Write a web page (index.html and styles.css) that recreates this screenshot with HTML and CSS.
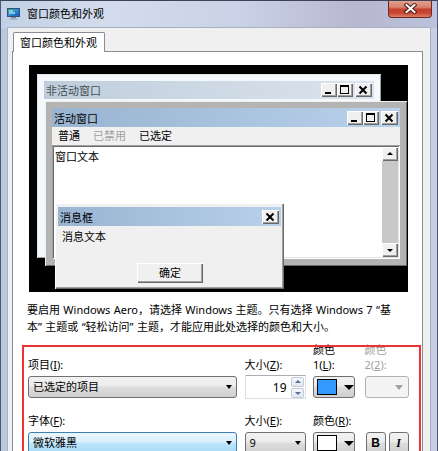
FILE: index.html
```html
<!DOCTYPE html>
<html lang="zh-CN">
<head>
    <meta charset="UTF-8">
    <meta name="viewport" content="width=device-width, initial-scale=1.0">
    <title>窗口颜色和外观</title>
    <link rel="stylesheet" href="styles.css">
</head>
<body>
    <div class="window">
        <div class="titlebar">
            <svg class="app-icon" width="13" height="12" viewBox="0 0 13 12">
                <defs>
                    <linearGradient id="scr" x1="0" y1="0" x2="1" y2="1">
                        <stop offset="0" stop-color="#36b25a"/>
                        <stop offset="0.5" stop-color="#2a8fd8"/>
                        <stop offset="1" stop-color="#1d4fa8"/>
                    </linearGradient>
                </defs>
                <rect x="0.5" y="0.5" width="12" height="8" fill="url(#scr)" stroke="#33507a"/>
                <path d="M2 3h4M2 5h6" stroke="#e6f3ff" stroke-width="1"/>
                <rect x="4" y="9" width="5" height="1.5" fill="#7d8796"/>
                <rect x="2.5" y="10.5" width="8" height="1.5" fill="#a9b2bf"/>
            </svg>
            <span class="title">窗口颜色和外观</span>
            <div class="close-btn">
                <svg width="13" height="11" viewBox="0 0 13 11">
                    <path d="M2.5 2l8 7M10.5 2l-8 7" stroke="#4a1c16" stroke-width="4" stroke-linecap="square"/>
                    <path d="M2.5 2l8 7M10.5 2l-8 7" stroke="#fff" stroke-width="2" stroke-linecap="square"/>
                </svg>
            </div>
        </div>

        <div class="client">
            <div class="tabs">
                <div class="tab">窗口颜色和外观</div>
            </div>

            <div class="page">
                <!-- preview of the current scheme -->
                <div class="preview">
                    <div class="pv-win pv-inactive">
                        <div class="pv-caption">
                            <span>非活动窗口</span>
                            <div class="caps">
                                <div class="cap"><svg width="16" height="14"><rect x="4" y="9" width="6" height="2"/></svg></div>
                                <div class="cap"><svg width="16" height="14"><path d="M3 2h9v9H3zM4 4v6h7V4z" fill-rule="evenodd"/></svg></div>
                                <div class="cap cap-close"><svg width="16" height="14"><path d="M4.5 3.5l7 7M11.5 3.5l-7 7" stroke="#000" stroke-width="2"/></svg></div>
                            </div>
                        </div>
                    </div>

                    <div class="pv-win pv-active">
                        <div class="pv-caption">
                            <span>活动窗口</span>
                            <div class="caps">
                                <div class="cap"><svg width="16" height="14"><rect x="4" y="9" width="6" height="2"/></svg></div>
                                <div class="cap"><svg width="16" height="14"><path d="M3 2h9v9H3zM4 4v6h7V4z" fill-rule="evenodd"/></svg></div>
                                <div class="cap cap-close"><svg width="16" height="14"><path d="M4.5 3.5l7 7M11.5 3.5l-7 7" stroke="#000" stroke-width="2"/></svg></div>
                            </div>
                        </div>
                        <div class="pv-menu">
                            <span>普通</span>
                            <span class="grayed">已禁用</span>
                            <span>已选定</span>
                        </div>
                        <div class="pv-text">
                            <div class="pv-body">窗口文本</div>
                            <div class="pv-scroll">
                                <div class="sb-btn sb-up"></div>
                                <div class="sb-btn sb-down"></div>
                            </div>
                        </div>
                    </div>

                    <div class="pv-win pv-msg">
                        <div class="pv-caption">
                            <span>消息框</span>
                            <div class="caps">
                                <div class="cap cap-close"><svg width="16" height="14"><path d="M4.5 3.5l7 7M11.5 3.5l-7 7" stroke="#000" stroke-width="2"/></svg></div>
                            </div>
                        </div>
                        <div class="pv-msgtext">消息文本</div>
                        <div class="pv-ok">确定</div>
                    </div>
                </div>

                <p class="note">
                    <span>要启用 Windows Aero，请选择 Windows 主题。只有选择 Windows 7 “基</span>
                    <span>本” 主题或 “轻松访问” 主题，才能应用此处选择的颜色和大小。</span>
                </p>

                <div class="settings">
                    <label class="lbl">项目(<u>I</u>):</label>
                    <label class="lbl">大小(<u>Z</u>):</label>
                    <label class="lbl">颜色<br>1(<u>L</u>):</label>
                    <label class="lbl grayed">颜色<br>2(<u>2</u>):</label>

                    <div class="combo">已选定的项目</div>
                    <div class="spin">
                        <span class="spin-val">19</span>
                        <div class="spin-btns">
                            <div class="spin-btn spin-up"></div>
                            <div class="spin-btn spin-down"></div>
                        </div>
                    </div>
                    <div class="color-btn"><span class="swatch swatch-blue"></span><span class="big-arrow"></span></div>
                    <div class="combo combo-off"></div>

                    <label class="lbl lbl-r2">字体(<u>F</u>):</label>
                    <label class="lbl lbl-r2">大小(<u>E</u>):</label>
                    <label class="lbl lbl-r2">颜色(<u>R</u>):</label>
                    <span class="lbl lbl-r2"></span>

                    <div class="combo combo-hot">微软雅黑</div>
                    <div class="combo">9</div>
                    <div class="color-btn"><span class="swatch"></span><span class="big-arrow"></span></div>
                    <div class="style-btns">
                        <div class="style-btn bold">B</div>
                        <div class="style-btn italic">I</div>
                    </div>
                </div>
            </div>
        </div>
    </div>
</body>
</html>
```

FILE: styles.css
```css
* {
    box-sizing: border-box;
}
body {
    margin: 0;
    width: 438px;
    height: 451px;
    overflow: hidden;
    font-family: "Noto Sans", "Noto Sans CJK SC", sans-serif;
    font-size: 11px;
    color: #000;
    background: #c5d2e5;
}
p {
    margin: 0;
}

/* outer frame */
.window {
    height: 451px;
    overflow: hidden;
    padding: 0 7px;
    border-top: 1px solid #3d4256;
    border-left: 1px solid #50567a;
    border-right: 1px solid #50567a;
    background: linear-gradient(to right, #b9c8dd 0%, #c9d5e8 30%, #cdd6e8 60%, #c1c4da 85%, #c7cfe3 100%);
}
.titlebar {
    display: flex;
    align-items: flex-start;
    height: 27px;
    margin: 0 -7px;
    padding-left: 6px;
    background: linear-gradient(to right, #c2d1e5 0%, #d3dcec 25%, #c9d2e6 55%, #b8b6d0 82%, #bcc3dc 100%);
}
.app-icon {
    margin-top: 7px;
}
.title {
    margin-left: 7px;
    margin-top: 5px;
    line-height: 16px;
    font-size: 11px;
    flex: 1;
}
.close-btn {
    width: 44px;
    height: 18px;
    margin-top: -1px;
    margin-right: 5px;
    display: flex;
    align-items: center;
    justify-content: center;
    border: 1px solid #6a2b22;
    border-top: none;
    border-radius: 0 0 4px 4px;
    background: linear-gradient(to bottom, #e4a595 0%, #d8826f 42%, #c5412b 55%, #c8462f 75%, #df7e67 100%);
}

.client {
    height: 423px;
    background: #f0f0f0;
    box-shadow: 0 0 0 1px #a6b1c4;
}

/* tab strip */
.tabs {
    height: 23px;
    padding: 4px 0 0 5px;
}
.tab {
    position: relative;
    z-index: 1;
    width: 92px;
    height: 20px;
    padding-left: 6px;
    line-height: 19px;
    background: #fff;
    border: 1px solid #898c95;
    border-bottom: none;
    border-radius: 2px 2px 0 0;
}
.page {
    height: 400px;
    overflow: hidden;
    margin: 0 7px 0 4px;
    padding-top: 13px;
    background: #fff;
    border: 1px solid #898c95;
    border-bottom: none;
}

/* scheme preview */
.preview {
    position: relative;
    width: 379px;
    height: 227px;
    margin-left: 16px;
    background: #000;
}
.pv-win {
    position: absolute;
}
.pv-inactive {
    left: 8px;
    top: 9px;
    width: 344px;
    height: 184px;
    padding: 7px;
    background: #f4f7fc;
    box-shadow: inset 1px 1px #e3e3e3, inset -1px -1px #a0a0a0;
}
.pv-active {
    left: 16px;
    top: 36px;
    width: 362px;
    height: 165px;
    padding: 7px 7px 6px;
    background: #b4b4b4;
    box-shadow: inset 1px 1px #f0f0f0, inset -1px -1px #696969;
}
.pv-msg {
    left: 26px;
    top: 138px;
    width: 229px;
    height: 86px;
    padding: 4px 3px 3px 3px;
    background: #f0f0f0;
    box-shadow: inset 1px 1px #fff, inset -1px -1px #696969, inset -2px -2px #a0a0a0;
}
.pv-caption {
    display: flex;
    align-items: center;
    justify-content: space-between;
    height: 19px;
    padding: 0 2px 0 2px;
    background: linear-gradient(to right, #99b4d1, #b9d1ea);
}
.pv-inactive .pv-caption {
    height: 18px;
    color: #434e54;
    background: linear-gradient(to right, #bfcddb, #dbe4ee);
}
.caps {
    display: flex;
}
.cap {
    width: 16px;
    height: 14px;
    background: #f0f0f0;
    box-shadow: inset 1px 1px #fff, inset -1px -1px #696969, inset -2px -2px #a0a0a0;
}
.cap svg {
    display: block;
}
.cap-close {
    margin-left: 2px;
    width: 17px;
}
.pv-menu {
    display: flex;
    height: 18px;
    line-height: 18px;
    padding-left: 6px;
    gap: 13px;
    background: #f0f0f0;
}
.grayed {
    color: #a0a0a0;
}
.pv-text {
    display: flex;
    height: 114px;
    background: #fff;
    box-shadow: inset 1px 1px #a0a0a0, inset -1px -1px #fff, inset 2px 2px #696969, inset -2px -2px #e3e3e3;
    padding: 2px;
}
.pv-body {
    flex: 1;
    padding: 2px 0 0 1px;
    line-height: 15px;
}
.pv-scroll {
    display: flex;
    flex-direction: column;
    justify-content: space-between;
    width: 16px;
    background: #c8c8c8;
}
.sb-btn {
    position: relative;
    height: 14px;
    background: #f0f0f0;
    box-shadow: inset 1px 1px #fff, inset -1px -1px #696969, inset -2px -2px #a0a0a0;
}
.sb-btn::after {
    content: "";
    position: absolute;
    left: 5px;
    border-left: 3px solid transparent;
    border-right: 3px solid transparent;
}
.sb-up::after {
    top: 5px;
    border-bottom: 3px solid #000;
}
.sb-down::after {
    top: 6px;
    border-top: 3px solid #000;
}
.pv-msgtext {
    margin: 3px 0 0 4px;
    line-height: 15px;
}
.pv-ok {
    width: 66px;
    height: 20px;
    margin: 19px 0 0 79px;
    line-height: 19px;
    text-align: center;
    background: #f0f0f0;
    box-shadow: inset 1px 1px #fff, inset -1px -1px #696969, inset -2px -2px #a0a0a0;
}

.note {
    margin: 9px 0 0 14px;
    line-height: 17px;
    white-space: nowrap;
    word-spacing: 0.5px;
}
.note span {
    display: block;
}

/* item / font settings */
.settings {
    position: relative;
    display: grid;
    grid-template-columns: 209px 61px 44px 44px;
    column-gap: 7.5px;
    width: 395px;
    margin: 7px 0 0 9px;
    padding-left: 6px;
}
.settings::after {
    content: "";
    position: absolute;
    left: 0;
    top: 3px;
    width: 395px;
    height: 120px;
    border: 2px solid #ee3131;
    pointer-events: none;
}
.lbl {
    align-self: end;
    line-height: 15px;
    margin-bottom: 4px;
}
.lbl-r2 {
    margin-top: 14px;
}
.combo {
    position: relative;
    height: 22px;
    padding-left: 4px;
    line-height: 20px;
    border: 1px solid #707070;
    border-radius: 3px;
    background: linear-gradient(#f2f2f2, #ebebeb 45%, #dddddd 50%, #cfcfcf);
}
.combo::after {
    content: "";
    position: absolute;
    right: 4px;
    top: 8px;
    border-left: 3.5px solid transparent;
    border-right: 3.5px solid transparent;
    border-top: 4px solid #000;
}
.combo-hot {
    border-color: #3c7fb1;
    background: linear-gradient(#eaf6fd, #d9f0fc 45%, #bee6fd 50%, #a7d9f5);
}
.combo-off {
    border-color: #adb2b5;
    background: #f4f4f4;
}
.combo-off::after {
    right: 5px;
    border-left-width: 4px;
    border-right-width: 4px;
    border-top: 5px solid #a0a0a0;
}
.spin {
    display: flex;
    align-items: center;
    height: 24px;
    margin-top: -1px;
    padding: 0 1px 0 4px;
    background: #fff;
    border: 1px solid #dbdfe6;
    border-top-color: #abadb3;
}
.spin-val {
    flex: 1;
    text-align: right;
    padding-right: 4px;
    font-size: 12px;
}
.spin-btns {
    display: flex;
    flex-direction: column;
    gap: 1px;
}
.spin-btn {
    position: relative;
    width: 13px;
    height: 10px;
    border: 1px solid #c3cbd8;
    border-radius: 2px;
    background: linear-gradient(#f5f7fb, #e2e8f0);
}
.spin-btn::after {
    content: "";
    position: absolute;
    left: 3px;
    border-left: 3px solid transparent;
    border-right: 3px solid transparent;
}
.spin-up::after {
    top: 2px;
    border-bottom: 3px solid #5a6f95;
}
.spin-down::after {
    top: 3px;
    border-top: 3px solid #5a6f95;
}
.color-btn {
    display: flex;
    align-items: center;
    width: 42px;
    height: 22px;
    padding-left: 3px;
    border: 1px solid #707070;
    border-radius: 3px;
    background: linear-gradient(#f2f2f2, #ebebeb 45%, #dddddd 50%, #cfcfcf);
}
.swatch {
    width: 20px;
    height: 16px;
    background: #fff;
    border: 1px solid #000;
}
.swatch-blue {
    background: #3399ff;
}
.big-arrow {
    margin-left: 7px;
    border-left: 5px solid transparent;
    border-right: 5px solid transparent;
    border-top: 5px solid #000;
}
.style-btns {
    display: flex;
    gap: 3px;
    margin-left: 1px;
}
.style-btn {
    width: 20px;
    height: 22px;
    line-height: 20px;
    text-align: center;
    font-size: 12px;
    border: 1px solid #707070;
    border-radius: 3px;
    background: linear-gradient(#f2f2f2, #ebebeb 45%, #dddddd 50%, #cfcfcf);
}
.bold {
    font-family: "Liberation Sans", sans-serif;
    font-weight: bold;
}
.italic {
    font-family: "Liberation Serif", serif;
    font-style: italic;
    font-weight: bold;
}
```
